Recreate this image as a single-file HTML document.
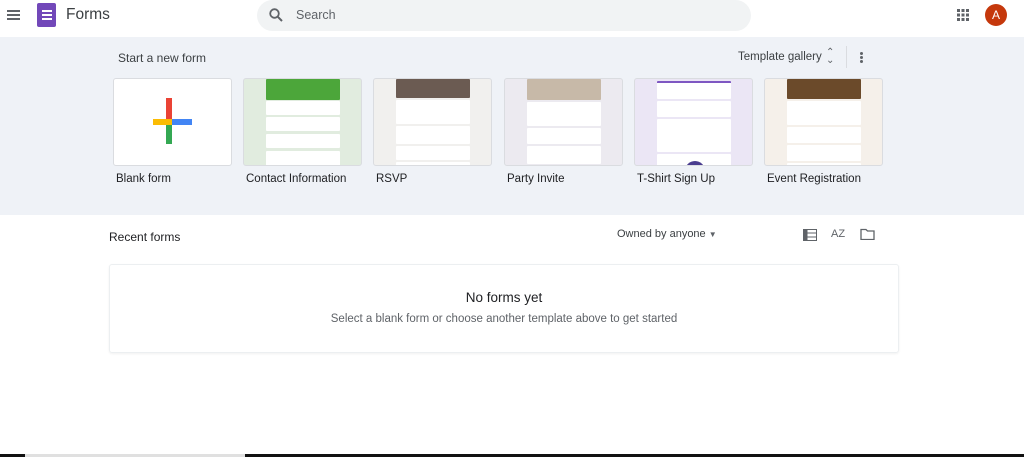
<!DOCTYPE html><html><head><style>
*{margin:0;padding:0;box-sizing:border-box}
body{width:1024px;height:457px;overflow:hidden;background:#fff;font-family:"Liberation Sans",Arial,sans-serif;color:#202124;position:relative}
.a{position:absolute}
.card{position:absolute;top:78px;width:119px;height:88px;border:1px solid #dadce0;border-radius:3px;background:#fff;overflow:hidden}
.lbl{position:absolute;top:173px;font-size:11.5px;color:#202124}
.sheet{position:absolute;left:22px;width:74px;top:0;bottom:0}
.blk{position:absolute;left:0;right:0;background:#fff;border-radius:1px}
</style></head><body>
<div class="a" style="left:7px;top:10px;width:13px;height:2px;background:#5f6368;box-shadow:0 4px 0 #5f6368,0 8px 0 #5f6368"></div>
<div class="a" style="left:37px;top:3px;width:19px;height:24px;background:#7248b9;border-radius:2px"></div>
<div class="a" style="left:42px;top:10px;width:10px;height:2px;background:#fff;box-shadow:0 4px 0 #fff,0 8px 0 #fff"></div>
<div class="a" style="left:66px;top:6px;font-size:15.5px;color:#3c4043">Forms</div>
<div class="a" style="left:257px;top:0;width:494px;height:31px;background:#f1f3f4;border-radius:16px"></div>
<svg class="a" style="left:268px;top:7px" width="16" height="16" viewBox="0 0 16 16"><circle cx="6.5" cy="6.5" r="4.3" fill="none" stroke="#5f6368" stroke-width="1.8"/><path d="M9.7 9.7L14 14" stroke="#5f6368" stroke-width="2"/></svg>
<div class="a" style="left:296px;top:8px;font-size:12.5px;color:#5f6368">Search</div>
<svg class="a" style="left:957px;top:9px" width="12" height="12"><g fill="#5f6368"><rect x="0" y="0" width="3" height="3"/><rect x="4.5" y="0" width="3" height="3"/><rect x="9" y="0" width="3" height="3"/><rect x="0" y="4.5" width="3" height="3"/><rect x="4.5" y="4.5" width="3" height="3"/><rect x="9" y="4.5" width="3" height="3"/><rect x="0" y="9" width="3" height="3"/><rect x="4.5" y="9" width="3" height="3"/><rect x="9" y="9" width="3" height="3"/></g></svg>
<div class="a" style="left:985px;top:4px;width:22px;height:22px;border-radius:50%;background:#c5380c;color:#fff;font-size:12px;text-align:center;line-height:22px">A</div>
<div class="a" style="left:0;top:37px;width:1024px;height:178px;background:#eff2f7"></div>
<div class="a" style="left:118px;top:51px;font-size:12px;color:#3c4043">Start a new form</div>
<div class="a" style="left:738px;top:51px;font-size:11.5px;color:#3c4043">Template gallery</div>
<div class="a" style="left:826px;top:49px;font-size:10px;color:#5f6368;line-height:8px">⌃<br>⌄</div>
<div class="a" style="left:846px;top:46px;width:1px;height:22px;background:#dadce0"></div>
<div class="a" style="left:860px;top:52px;width:3px;height:3px;background:#5f6368;border-radius:50%;box-shadow:0 4px 0 #5f6368,0 8px 0 #5f6368"></div>

<div class="card" style="left:113px">
<div class="a" style="left:52px;top:19px;width:6px;height:22px;background:#ea4335"></div>
<div class="a" style="left:39px;top:40px;width:19px;height:6px;background:#fbbc04"></div>
<div class="a" style="left:58px;top:40px;width:20px;height:6px;background:#4285f4"></div>
<div class="a" style="left:52px;top:46px;width:6px;height:19px;background:#34a853"></div>
</div>
<div class="lbl" style="left:116px">Blank form</div>

<div class="card" style="left:243px;background:#e1ecdf"><div class="sheet"><div class="blk" style="top:0;height:21px;background:#4ca63a"></div><div class="blk" style="top:22px;height:14px"></div><div class="blk" style="top:38px;height:14px"></div><div class="blk" style="top:55px;height:14px"></div><div class="blk" style="top:72px;height:20px"></div></div></div>
<div class="lbl" style="left:246px">Contact Information</div>

<div class="card" style="left:373px;background:#f1f0ee"><div class="sheet"><div class="blk" style="top:0;height:19px;background:#6b5b52"></div><div class="blk" style="top:21px;height:24px"></div><div class="blk" style="top:47px;height:18px"></div><div class="blk" style="top:67px;height:14px"></div><div class="blk" style="top:83px;height:10px"></div></div></div>
<div class="lbl" style="left:376px">RSVP</div>

<div class="card" style="left:504px;background:#eceaf0"><div class="sheet"><div class="blk" style="top:0;height:21px;background:#c7b9a8"></div><div class="blk" style="top:23px;height:24px"></div><div class="blk" style="top:49px;height:16px"></div><div class="blk" style="top:67px;height:18px"></div><div class="blk" style="top:87px;height:8px"></div></div></div>
<div class="lbl" style="left:507px">Party Invite</div>

<div class="card" style="left:634px;background:#ebe6f5"><div class="sheet"><div class="blk" style="top:2px;height:18px;border-top:2px solid #7e57c2"></div><div class="blk" style="top:22px;height:16px"></div><div class="blk" style="top:40px;height:33px"></div><div class="blk" style="top:75px;height:20px"></div><div class="a" style="left:28px;top:82px;width:20px;height:10px;border-radius:10px 10px 0 0;background:#4a3d8f"></div></div></div>
<div class="lbl" style="left:637px">T-Shirt Sign Up</div>

<div class="card" style="left:764px;background:#f5f0ea"><div class="sheet"><div class="blk" style="top:0;height:20px;background:#6b4a2a"></div><div class="blk" style="top:22px;height:24px"></div><div class="blk" style="top:48px;height:16px"></div><div class="blk" style="top:66px;height:16px"></div><div class="blk" style="top:84px;height:10px"></div></div></div>
<div class="lbl" style="left:767px">Event Registration</div>

<div class="a" style="left:109px;top:230px;font-size:12px;color:#202124">Recent forms</div>
<div class="a" style="left:617px;top:228px;font-size:11px;color:#3c4043">Owned by anyone <span style="font-size:8px;color:#5f6368">▼</span></div>
<svg class="a" style="left:803px;top:229px" width="14" height="12"><rect x="0.5" y="0.5" width="13" height="11" fill="none" stroke="#5f6368"/><path d="M0 4h14M0 8h14M4 0v12" stroke="#5f6368"/><rect x="0" y="0" width="4" height="12" fill="#5f6368"/></svg>
<div class="a" style="left:831px;top:228px;font-size:11px;color:#5f6368">AZ</div>
<svg class="a" style="left:860px;top:228px" width="15" height="12"><path d="M1 1.5h5l1.5 1.5H14v8.5H1z" fill="none" stroke="#5f6368" stroke-width="1.3"/></svg>
<div class="a" style="left:109px;top:264px;width:790px;height:89px;border:1px solid #eceff1;border-radius:3px;box-shadow:0 1px 2px rgba(0,0,0,.06)"></div>
<div class="a" style="left:109px;top:290px;width:790px;text-align:center;font-size:13.5px;color:#202124">No forms yet</div>
<div class="a" style="left:109px;top:313px;width:790px;text-align:center;font-size:11.5px;color:#5f6368">Select a blank form or choose another template above to get started</div>
<div class="a" style="left:0;top:454px;width:1024px;height:3px;background:#111"></div>
<div class="a" style="left:25px;top:454px;width:220px;height:3px;background:#e0e0e0"></div>
</body></html>
